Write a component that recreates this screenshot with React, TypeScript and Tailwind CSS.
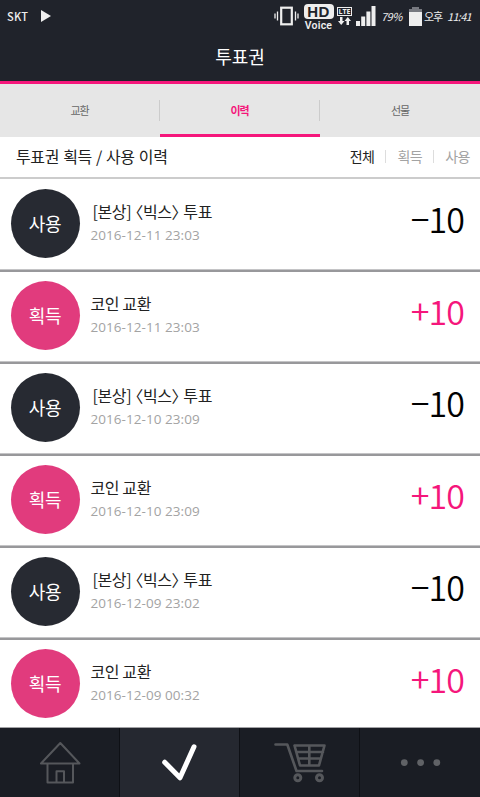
import clsx from 'clsx';

interface HistoryItem {
  type: '사용' | '획득';
  title: string;
  date: string;
}

const items: HistoryItem[] = [
  { type: '사용', title: '[본상] 〈빅스〉 투표', date: '2016-12-11 23:03' },
  { type: '획득', title: '코인 교환', date: '2016-12-11 23:03' },
  { type: '사용', title: '[본상] 〈빅스〉 투표', date: '2016-12-10 23:09' },
  { type: '획득', title: '코인 교환', date: '2016-12-10 23:09' },
  { type: '사용', title: '[본상] 〈빅스〉 투표', date: '2016-12-09 23:02' },
  { type: '획득', title: '코인 교환', date: '2016-12-09 00:32' },
];

function StatusBar() {
  return (
    <div className="flex h-8 items-center pl-[7px] pr-[9px] text-[#eeeeee]">
      <span className="w-[34px] text-[11px] font-medium leading-none tracking-[0.2px]">SKT</span>
      <svg width="10" height="12" viewBox="0 0 10 12" fill="currentColor">
        <path d="M0 0L10 6L0 12Z" />
      </svg>
      <div className="ml-auto flex h-8 items-center">
        <svg width="25" height="20" viewBox="0 0 25 20" fill="none" stroke="currentColor">
          <path d="M1 7.5V12.5M3.5 5.5V14.5M21.5 5.5V14.5M24 7.5V12.5" strokeWidth="1.3" />
          <rect x="7.2" y="1.7" width="10.6" height="16.6" strokeWidth="2.2" />
        </svg>
        <div className="ml-1 flex w-[31px] flex-col items-center pt-[2px]">
          <span className="flex h-[15px] w-[30px] items-center justify-center rounded-[4px] bg-[#eeeeee] font-['Liberation_Sans',sans-serif] text-[15px] font-bold leading-[15px] tracking-[0.5px] text-[#20232b]">
            HD
          </span>
          <span className="mt-px font-['Roboto',sans-serif] text-[10.5px] font-semibold leading-[11px] tracking-[0.2px]">
            Voice
          </span>
        </div>
        <div className="ml-[3px] flex w-[15px] flex-col items-center gap-px">
          <span className="flex h-[9px] w-[15px] items-center justify-center border border-current font-['Open_Sans',sans-serif] text-[7px] font-bold leading-none">
            LTE
          </span>
          <svg width="13" height="8" viewBox="0 0 13 8" fill="currentColor">
            <path d="M2 0H4.5V4H6.5L3.2 8L0 4H2ZM8.5 8V4H6.5L9.8 0L13 4H11V8Z" />
          </svg>
        </div>
        <svg className="ml-1" width="20" height="20" viewBox="0 0 20 20" fill="currentColor">
          <path d="M0 15H4V20H0ZM5.2 10.5H9.2V20H5.2ZM10.4 5.5H14.4V20H10.4ZM15.5 0H19.5V20H15.5Z" />
        </svg>
        <span className="ml-[5px] w-[23px] whitespace-nowrap text-[11px] italic leading-none tracking-[-0.5px]">79%</span>
        <svg className="ml-[5px]" width="13" height="19" viewBox="0 0 13 19">
          <path d="M3 0H10V2H13V5H0V2H3Z" fill="#777980" />
          <rect y="5" width="13" height="14" fill="#eeeeee" />
        </svg>
        <span className="ml-[2px] w-[17px] whitespace-nowrap text-[11px] leading-none tracking-[-1px]">오후</span>
        <span className="ml-[6px] w-[24px] whitespace-nowrap text-[11px] italic leading-none tracking-[-0.7px]">11:41</span>
      </div>
    </div>
  );
}

function Tabs() {
  return (
    <div className="grid h-[53px] grid-cols-3 bg-[#e6e6e6] text-[11px] tracking-[-1.2px] text-[#666666]">
      <div className="flex items-center justify-between">
        <span className="flex-1 text-center">교환</span>
        <i className="h-[21px] w-px bg-[#cccccc]" />
      </div>
      <div className="flex items-center border-b-[3px] border-[#f5167b] pt-[3px] font-bold text-[#f5167b]">
        <span className="flex-1 text-center">이력</span>
        <i className="h-[21px] w-px bg-[#cccccc]" />
      </div>
      <div className="flex items-center">
        <span className="flex-1 text-center">선물</span>
      </div>
    </div>
  );
}

function HistoryRow({ item }: { item: HistoryItem }) {
  const used = item.type === '사용';
  return (
    <li className="flex h-[92px] shrink-0 border-b-2 border-[#98989b] pl-[10.5px] pr-4 pt-[9px] shadow-[inset_0_-1px_0_#c4c4c6]">
      <div
        className={clsx(
          'flex size-[69px] shrink-0 items-center justify-center rounded-full text-[18px] tracking-[-0.2px] text-white',
          used ? 'bg-[#272a32]' : 'bg-[#e13b7d]',
        )}
      >
        {item.type}
      </div>
      <div className="ml-[11px] flex-1 pt-[11px]">
        <p
          className={clsx(
            "h-6 whitespace-nowrap text-[16px] leading-[23px] tracking-[-0.4px] text-[#222222] [font-feature-settings:'halt']",
            used && 'pl-[2px] [word-spacing:1px]',
          )}
        >
          {item.title}
        </p>
        <p className="font-['Open_Sans',sans-serif] text-[13.5px] leading-[22px] tracking-[0.05px] text-[#a3a3a3]">{item.date}</p>
      </div>
      <div
        className={clsx(
          'text-[34px] font-[350] leading-[59px] tracking-[-0.9px]',
          used ? 'text-black' : 'text-[#f5167b]',
        )}
      >
        {used ? '−10' : '+10'}
      </div>
    </li>
  );
}

function BottomNav() {
  return (
    <nav className="grid h-[70px] shrink-0 grid-cols-4 border-t border-[#a2a2a5] bg-[#1a1d24]">
      <div className="border-r border-[#0e1015]">
        <svg width="119" height="69" viewBox="0 0 119 69" fill="none" stroke="#55575b" strokeWidth="2" strokeLinejoin="round">
          <path d="M60.3 15L41 35.5H79.5ZM47.5 35.5V54.5H73V35.5M56.5 54.5V43.3H64V54.5" />
        </svg>
      </div>
      <div className="border-r border-[#0e1015] bg-[#252830]">
        <svg width="119" height="69" viewBox="0 0 119 69" fill="none" stroke="#ffffff" strokeWidth="5" strokeLinecap="round" strokeLinejoin="round">
          <path d="M44.7 34.2L60 49.8L74 18.8" />
        </svg>
      </div>
      <div className="border-r border-[#0e1015]">
        <svg width="119" height="69" viewBox="0 0 119 69" fill="none" stroke="#55575b" strokeWidth="2.6" strokeLinecap="round" strokeLinejoin="round">
          <path d="M35.5 16.5H47.3L56.5 43H82" />
          <path d="M54.5 17.5H84.5L79 37.5H60ZM57 24H83M58.5 30.5H81M69.3 17.5V37.5" />
          <circle cx="57.8" cy="49.8" r="3" strokeWidth="3" />
          <circle cx="79.5" cy="49.8" r="3" strokeWidth="3" />
        </svg>
      </div>
      <div>
        <svg width="120" height="69" viewBox="0 0 120 69" fill="#606266">
          <circle cx="44.3" cy="34.6" r="3.4" />
          <circle cx="60.6" cy="34.6" r="3.4" />
          <circle cx="76.8" cy="34.6" r="3.4" />
        </svg>
      </div>
    </nav>
  );
}

export default function App() {
  return (
    <div className="flex h-[797px] w-[480px] flex-col overflow-hidden bg-white font-['Noto_Sans_CJK_KR',sans-serif]">
      <header className="h-[84px] shrink-0 border-b-[3px] border-[#f5167b] bg-[#20232b]">
        <StatusBar />
        <h1 className="text-center text-[18px] leading-[49px] tracking-[-0.1px] text-white">투표권</h1>
      </header>
      <Tabs />
      <div className="flex h-[42px] shrink-0 items-center justify-between border-b-2 border-[#cccccc] pb-[2px] pl-4 pr-[10px]">
        <h2 className="text-[16px] tracking-[-0.4px] text-[#222222] [word-spacing:1px]">투표권 획득 / 사용 이력</h2>
        <div className="flex items-center text-[14px] tracking-[-0.5px] text-[#a3a3a3]">
          <span className="text-[#222222]">전체</span>
          <i className="mx-[11px] h-[13px] w-px bg-[#dddddd]" />
          <span>획득</span>
          <i className="mx-[11px] h-[13px] w-px bg-[#dddddd]" />
          <span>사용</span>
        </div>
      </div>
      <ul className="flex min-h-0 flex-1 flex-col overflow-hidden pt-px">
        {items.map((item, index) => (
          <HistoryRow key={index} item={item} />
        ))}
      </ul>
      <BottomNav />
    </div>
  );
}
